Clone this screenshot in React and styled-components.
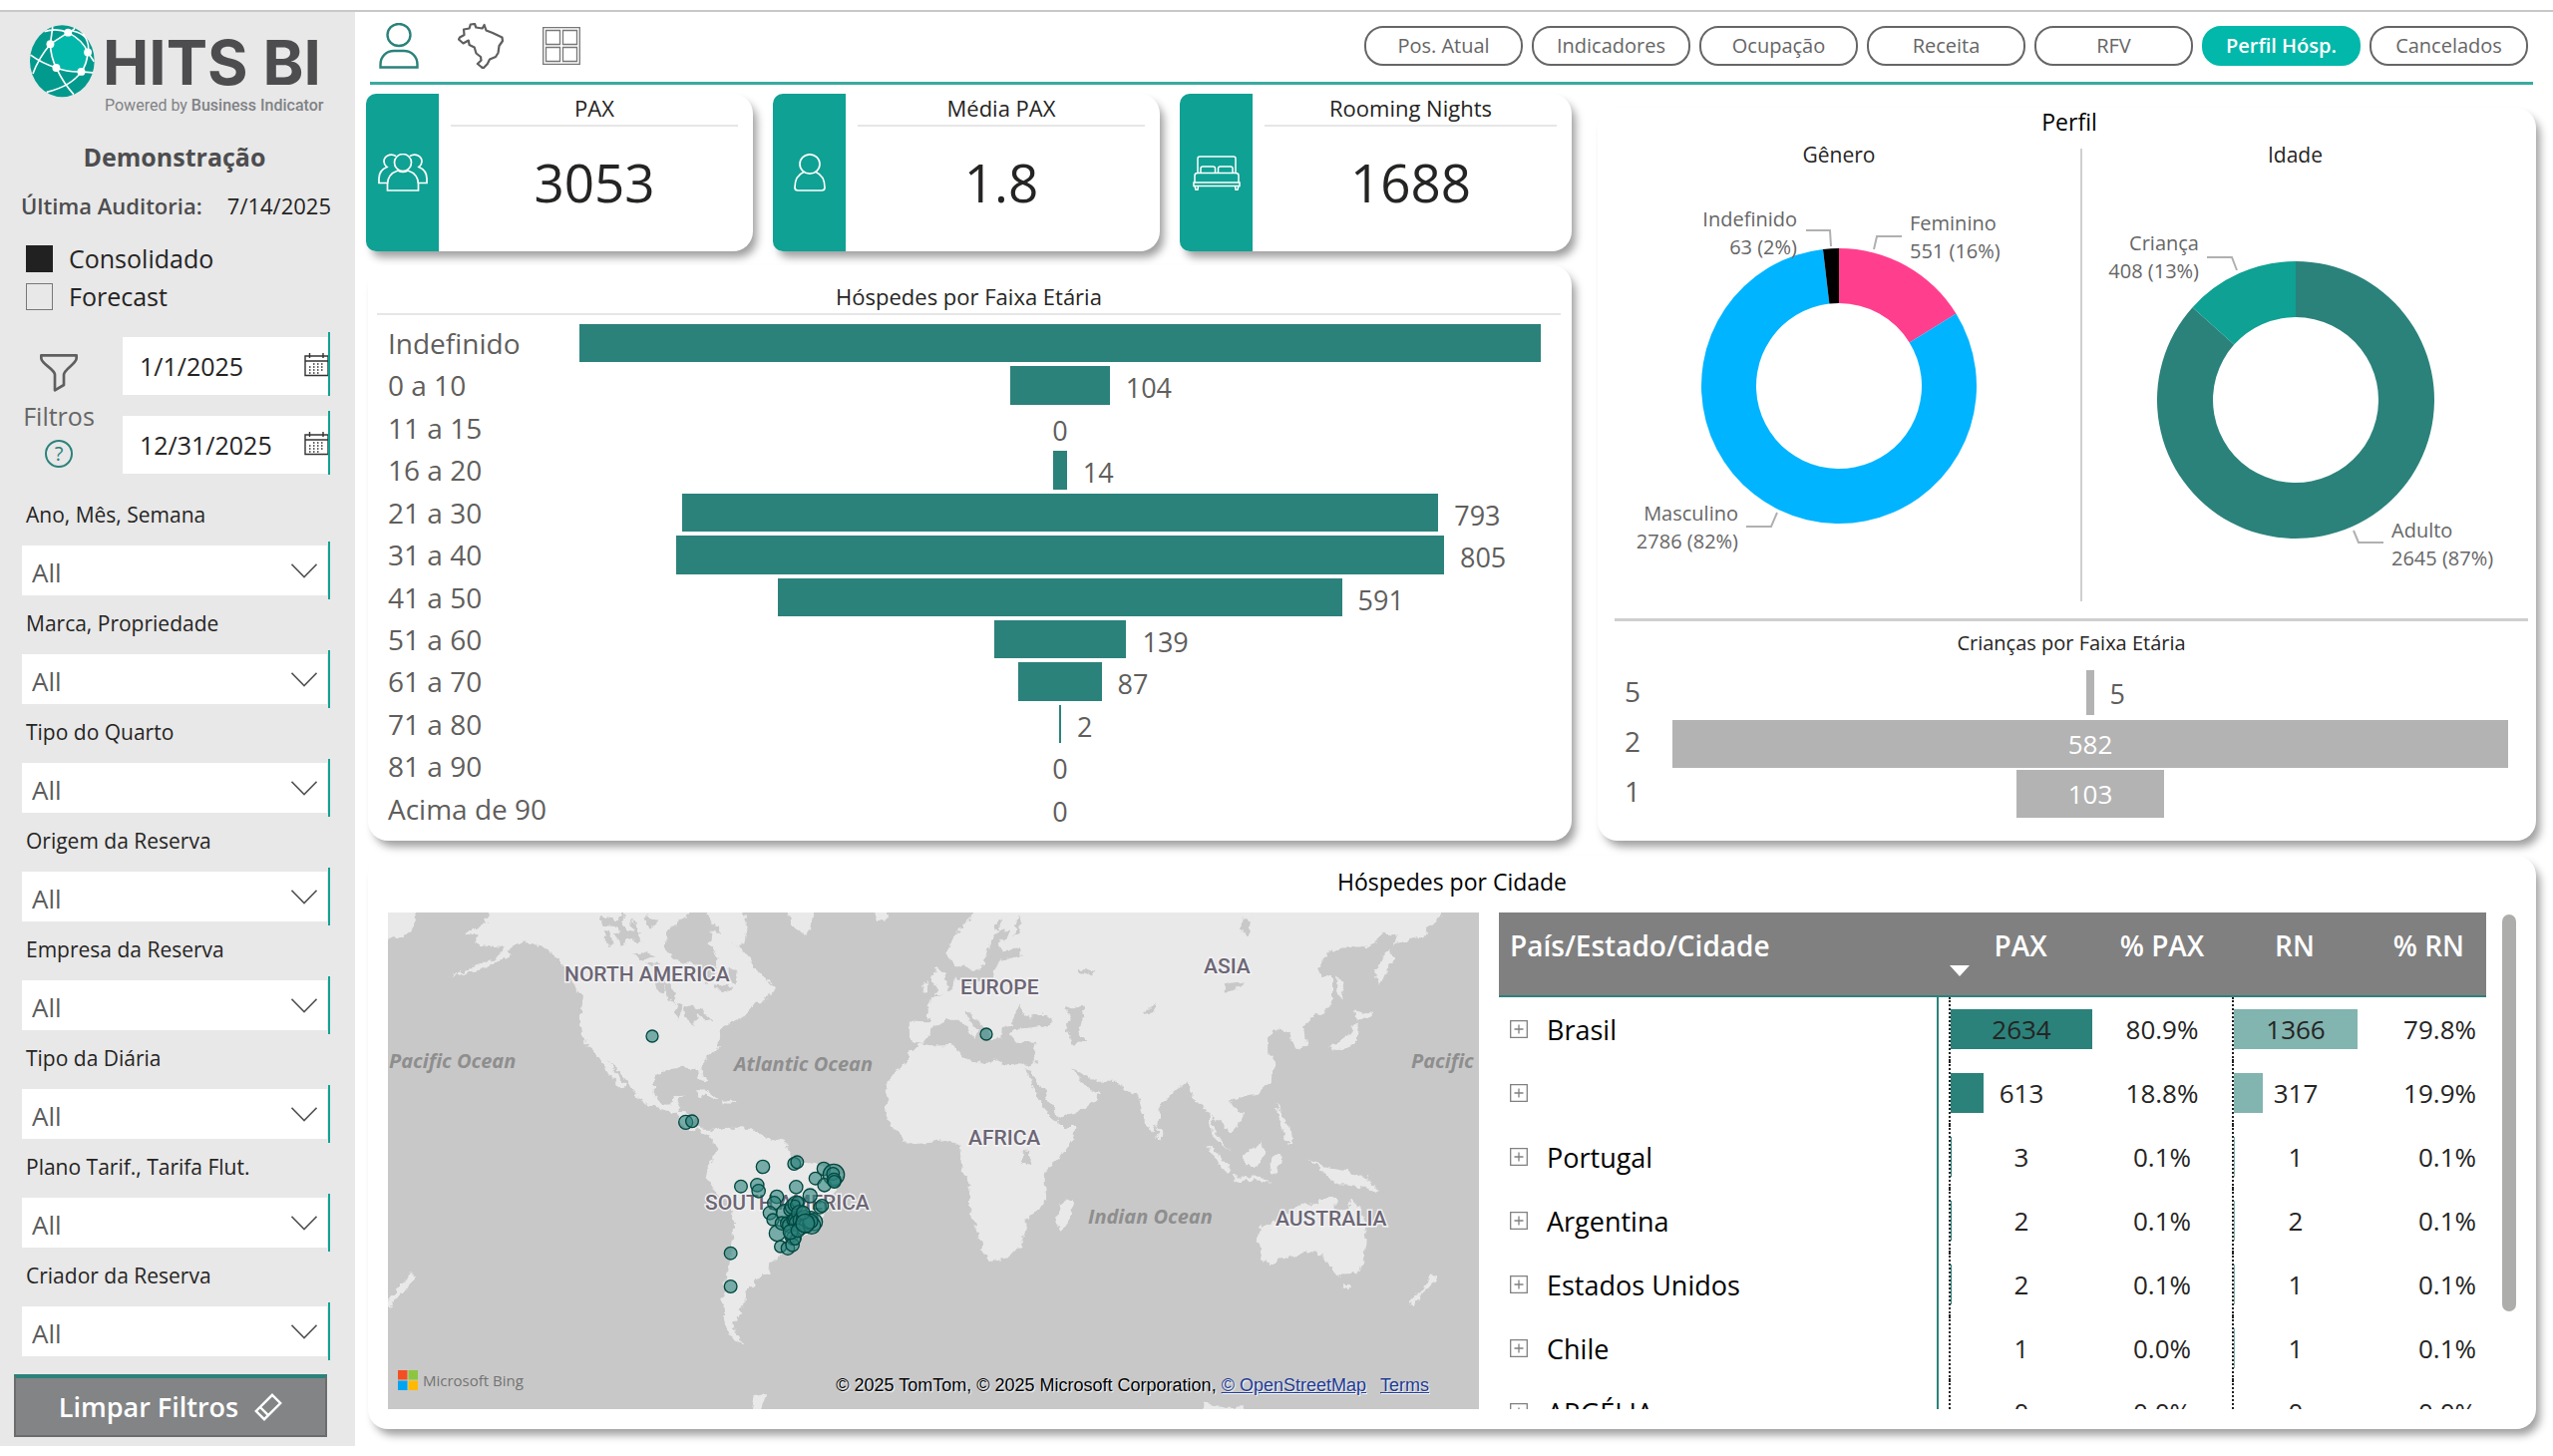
import { useState } from "react";
import styled, { createGlobalStyle } from "styled-components";

// -------------------- ESTILOS -------------------- //
const GlobalStyle = createGlobalStyle`
  * { box-sizing: border-box; }
  body {
    margin: 0;
    background: #fff;
    color: #252423;
    font-family: 'Open Sans', 'Noto Sans', sans-serif;
  }
  button, input, select { font-family: inherit; }
`;

const Page = styled.div`
  min-height: 100vh;
  padding: 10px 0;
  background: #fff;
`;

const Frame = styled.div`
  display: flex;
  border-top: 2px solid #c8c8c8;
`;

const Sidebar = styled.aside`
  display: flex;
  flex-direction: column;
  flex: 0 0 356px;
  padding: 13px 0 9px;
  background: #e8e8e8;
`;

const Brand = styled.div`
  display: flex;
  gap: 8px;
  padding-left: 30px;
`;

const BrandText = styled.div`
  padding-top: 8px;
  white-space: nowrap;
`;

const BrandName = styled.div`
  font-family: Inter, sans-serif;
  font-size: 62px;
  font-weight: 700;
  line-height: 60px;
  color: #4d4d4f;
`;

const BrandNote = styled.div`
  margin: 3px 0 0 2px;
  font-family: Roboto, sans-serif;
  font-size: 16px;
  line-height: 20px;
  color: #808285;

  b { font-weight: 500; }
`;

const HotelName = styled.h1`
  margin: 23px 0 0;
  padding-right: 6px;
  font-size: 25px;
  font-weight: 700;
  line-height: 36px;
  text-align: center;
  color: #4d4d4f;
`;

const AuditRow = styled.div`
  display: flex;
  justify-content: space-between;
  margin: 16px 24px 0 21px;
  font-size: 22px;
  line-height: 30px;
  white-space: nowrap;

  b {
    font-weight: 600;
    color: #4d4d4f;
  }
`;

const CheckList = styled.div`
  margin: 19px 0 0 26px;
`;

const CheckLabel = styled.label`
  display: flex;
  align-items: center;
  gap: 16px;
  height: 38px;
  font-size: 25px;
`;

const CheckBox = styled.input`
  appearance: none;
  width: 27px;
  height: 27px;
  margin: 0;
  border: 1px solid #777;

  &:checked {
    background: #212121;
    border-color: #212121;
  }
`;

const FilterHead = styled.div`
  display: flex;
  justify-content: space-between;
  margin: 17px 25px 0 14px;
`;

const FilterCaption = styled.div`
  display: flex;
  flex-direction: column;
  align-items: center;
  width: 90px;
  padding-top: 22px;
  font-size: 25px;
  line-height: 48px;
  color: #666;
`;

const HelpButton = styled.button`
  width: 28px;
  height: 28px;
  padding: 0;
  border: 2px solid #2b827b;
  border-radius: 50%;
  background: none;
  font-size: 20px;
  line-height: 24px;
  color: #2b827b;
`;

const DateStack = styled.div`
  display: grid;
  gap: 15px;
  width: 208px;
`;

const FieldBox = styled.div`
  position: relative;
  padding: ${({ $date }) => ($date ? "5px 0 1px" : "4px 1px 4px 0")};
  border-right: 2px solid #0fa193;

  svg {
    position: absolute;
    top: ${({ $date }) => ($date ? "21px" : "22px")};
    right: ${({ $date }) => ($date ? "0" : "11px")};
    pointer-events: none;
  }
`;

const DateInput = styled.input`
  display: block;
  width: 100%;
  height: 58px;
  padding: 0 0 0 17px;
  border: 0;
  background: #fff;
  font-size: 25px;
  color: #252423;
`;

const FilterList = styled.div`
  display: grid;
  gap: 10px;
  margin: 26px 25px 0 22px;
`;

const FilterLabel = styled.label`
  display: block;
  margin: 0 0 13px 4px;
  font-size: 21px;
  font-weight: 500;
  line-height: 28px;
`;

const Select = styled.select`
  appearance: none;
  display: block;
  width: 100%;
  height: 50px;
  padding: 3px 0 0 10px;
  border: 0;
  border-radius: 0;
  background: #fff;
  font-size: 26px;
  color: #5c5c5c;
`;

const ClearButton = styled.button`
  display: flex;
  align-items: center;
  justify-content: center;
  gap: 16px;
  height: 63px;
  margin: 14px 28px 0 14px;
  border: 2px solid #6b6c6d;
  border-top: 4px solid #2b827b;
  background: #828486;
  font-size: 27px;
  font-weight: 600;
  color: #fff;
`;

const Content = styled.main`
  flex: 1;
  min-width: 0;
  padding: 0 17px 17px 11px;
`;

const Header = styled.header`
  display: flex;
  align-items: center;
  justify-content: space-between;
  height: 73px;
  margin: 0 3px 0 4px;
  padding: 0 5px 2px 9px;
  border-bottom: 3px solid #3aaa9f;
`;

const IconNav = styled.nav`
  display: flex;
  align-items: center;
  gap: 39px;
`;

const IconButton = styled.button`
  display: flex;
  padding: 0;
  border: 0;
  background: none;
`;

const Tabs = styled.nav`
  display: flex;
  gap: 9px;
`;

const Tab = styled.button`
  width: 159px;
  height: 40px;
  padding: 0;
  border: 2px solid ${({ $active }) => ($active ? "#01b8aa" : "#666")};
  border-radius: 19px;
  background: ${({ $active }) => ($active ? "#01b8aa" : "#fff")};
  font-size: 20px;
  font-weight: ${({ $active }) => ($active ? 600 : 400)};
  line-height: 36px;
  color: ${({ $active }) => ($active ? "#fff" : "#666")};
`;

const Upper = styled.div`
  display: grid;
  grid-template-columns: 1209fr 941fr;
  gap: 26px;
  margin-top: 9px;
`;

const LeftColumn = styled.div`
  display: flex;
  flex-direction: column;
  gap: 14px;
`;

const Card = styled.section`
  border-radius: 20px;
  background: #fff;
  box-shadow: 5px 7px 9px -1px rgba(0, 0, 0, 0.38);
`;

const KpiRow = styled.div`
  display: grid;
  grid-template-columns: 388fr 388fr 393fr;
  gap: 20px;
`;

const Kpi = styled(Card)`
  display: flex;
  height: 158px;
  border-radius: 10px 20px 20px 10px;
`;

const KpiIcon = styled.div`
  display: flex;
  align-items: center;
  justify-content: center;
  flex: 0 0 73px;
  border-radius: 10px 0 0 10px;
  background: #0fa193;
`;

const KpiBody = styled.div`
  flex: 1;
  padding: 0 15px 0 12px;
  text-align: center;
`;

const KpiTitle = styled.h2`
  margin: 0;
  padding-bottom: 3px;
  border-bottom: 2px solid #e6e6e6;
  font-size: 22px;
  font-weight: 400;
  line-height: 28px;
`;

const KpiValue = styled.div`
  font-size: 53px;
  line-height: 112px;
`;

const FunnelCard = styled(Card)`
  display: flex;
  flex: 1;
  flex-direction: column;
  margin-left: 2px;
  padding: 14px 11px 13px 9px;
`;

const ChartTitle = styled.h2`
  margin: 0;
  font-size: ${({ $size }) => $size || 22}px;
  font-weight: 400;
  line-height: 34px;
  text-align: center;
  color: ${({ $dark }) => ($dark ? "#000" : "#252423")};
`;

const Rule = styled.hr`
  width: auto;
  margin: ${({ $margin }) => $margin || 0};
  height: ${({ $thick }) => $thick || 2}px;
  border: 0;
  background: ${({ $color }) => $color || "#e6e6e6"};
`;

const FunnelRows = styled.div`
  display: flex;
  flex: 1;
  flex-direction: column;
  gap: 4px;
  padding: 9px 20px 0 11px;
`;

const BarRow = styled.div`
  display: grid;
  grid-template-columns: ${({ $label }) => $label}px 1fr;
  flex: 1;
  align-items: stretch;
  min-height: 38px;
  font-size: 28px;
  line-height: 38px;
  color: #605e5c;
`;

const BarTrack = styled.div`
  display: flex;
  justify-content: center;
  font-size: 27px;

  &::before {
    content: "";
    flex: 1 1 0;
  }
`;

const Bar = styled.div`
  flex: none;
  background: ${({ $color }) => $color};
`;

const BarInside = styled(Bar)`
  text-align: center;
  font-size: 26px;
  line-height: 48px;
  color: #fff;
`;

const BarValue = styled.span`
  flex: 1 1 0;
  width: 0;
  height: 38px;
  padding-top: 3px;
  text-indent: 16px;
  white-space: nowrap;
`;

const BarZero = styled.span`
  height: 38px;
  padding-top: 3px;
`;

const BarEnd = styled.span`
  flex: 1 1 0;
`;

const ProfileCard = styled(Card)`
  margin-top: 14px;
  padding-bottom: 26px;
`;

const ProfileTitle = styled.h2`
  margin: 0;
  padding-left: 5px;
  font-size: 23px;
  font-weight: 400;
  line-height: 29px;
  text-align: center;
  color: #000;
`;

const Halves = styled.div`
  display: grid;
  grid-template-columns: 484fr 2px 427fr;
  padding-right: 28px;
`;

const Half = styled.div`
  display: flex;
  flex-direction: column;
  align-items: center;
  min-width: 0;
`;

const HalfTitle = styled.h3`
  margin: 0;
  font-size: 21px;
  font-weight: 400;
  line-height: 36px;
`;

const Divider = styled.div`
  margin-top: 12px;
  background: #d0d0d0;
`;

const DonutSvg = styled.svg`
  display: block;
  overflow: visible;
  font-size: 20px;
  fill: #666;
`;

const KidsTitle = styled(ProfileTitle)`
  padding-left: 9px;
  font-size: 20px;
  line-height: 34px;
  color: #252423;
`;

const KidsRows = styled.div`
  display: grid;
  gap: 5px;
  padding: 10px 28px 0 27px;
`;

const KidsRow = styled(BarRow)`
  height: 45px;
  line-height: 42px;
`;

const CityCard = styled(Card)`
  margin: 15px 0 0 2px;
  padding: 9px 20px 20px;
`;

const CityGrid = styled.div`
  display: grid;
  grid-template-columns: 1094fr 20px 990fr 16px 14px;
  margin-top: 14px;
`;

const MapBox = styled.div`
  position: relative;
  background: #c8c8c8;
  overflow: hidden;

  > svg {
    display: block;
    width: 100%;
    height: auto;
  }
`;

const RegionLabel = styled.text`
  font-family: Roboto, sans-serif;
  font-size: 21px;
  font-weight: 500;
  fill: #6c6675;
  stroke: #f2f2f2;
  stroke-width: 3px;
  paint-order: stroke;
`;

const OceanLabel = styled.text`
  font-size: 20px;
  font-style: italic;
  font-weight: 700;
  fill: #8e8e8e;
`;

const MapCredits = styled.div`
  position: absolute;
  right: 50px;
  bottom: 13px;
  font-family: 'Liberation Sans', sans-serif;
  font-size: 18px;
  line-height: 22px;
  color: #000;
  white-space: nowrap;
  text-shadow: 1px 1px 1px #fff;

  a { color: #1f3a93; }
  a + a { margin-left: 9px; }
`;

const BingMark = styled.div`
  position: absolute;
  left: 10px;
  bottom: 19px;
  display: flex;
  align-items: center;
  gap: 5px;
  font-size: 15px;
  line-height: 20px;
  color: #737373;
`;

const TableClip = styled.div`
  grid-column: 3;
  height: 0;
  min-height: 100%;
  overflow: hidden;
`;

const Table = styled.table`
  width: 100%;
  border-collapse: separate;
  border-spacing: 0;
  table-layout: fixed;
  font-size: 26px;
  text-align: center;
`;

const Th = styled.th`
  height: 85px;
  padding: 13px 11px 0;
  border-bottom: 2px solid #2b827b;
  background: #808080;
  font-size: 28px;
  font-weight: 600;
  line-height: 40px;
  color: #fff;
  text-align: ${({ $align }) => $align || "center"};
  vertical-align: top;

  &:last-child { padding-right: 22px; }
`;

const SortMark = styled.span`
  display: block;
  width: 20px;
  height: 11px;
  background: #fff;
  clip-path: polygon(0 0, 100% 0, 50% 100%);
`;

const Td = styled.td`
  height: 64px;
  padding: 0;
  line-height: 40px;

  &:last-child {
    padding-right: 10px;
    text-align: right;
  }
`;

const NameCell = styled.th`
  height: 64px;
  padding: 0 0 0 11px;
  border-right: 2px solid #2b827b;
  font-size: 27px;
  font-weight: 400;
  text-align: left;
  color: #000;

  > div {
    display: flex;
    align-items: center;
    gap: 19px;
  }
`;

const Expand = styled.button`
  display: flex;
  padding: 0;
  border: 0;
  background: none;
`;

const DataBar = styled.div`
  display: grid;
  align-items: center;
  height: 64px;
  margin-left: 10px;
  padding-right: 10px;
  border-left: 2px dotted #222;

  > * { grid-area: 1 / 1; }
`;

const DataFill = styled.div`
  height: 40px;
  background: ${({ $color }) => $color};
`;

const Scroll = styled.div`
  grid-column: 5;
  height: 80%;
  margin-top: 2px;
  border-radius: 7px;
  background: #adadab;
`;

// -------------------- DATOS -------------------- //
const filtros = [
  "Ano, Mês, Semana",
  "Marca, Propriedade",
  "Tipo do Quarto",
  "Origem da Reserva",
  "Empresa da Reserva",
  "Tipo da Diária",
  "Plano Tarif., Tarifa Flut.",
  "Criador da Reserva",
];

const abas = ["Pos. Atual", "Indicadores", "Ocupação", "Receita", "RFV", "Perfil Hósp.", "Cancelados"];

const faixas = [
  { faixa: "Indefinido", total: 1008, semRotulo: true },
  { faixa: "0 a 10", total: 104 },
  { faixa: "11 a 15", total: 0 },
  { faixa: "16 a 20", total: 14 },
  { faixa: "21 a 30", total: 793 },
  { faixa: "31 a 40", total: 805 },
  { faixa: "41 a 50", total: 591 },
  { faixa: "51 a 60", total: 139 },
  { faixa: "61 a 70", total: 87 },
  { faixa: "71 a 80", total: 2 },
  { faixa: "81 a 90", total: 0 },
  { faixa: "Acima de 90", total: 0 },
];

const criancas = [
  { idade: "5", total: 5 },
  { idade: "2", total: 582 },
  { idade: "1", total: 103 },
];

const genero = [
  { valor: 551, cor: "#ff3f8e" },
  { valor: 2786, cor: "#00b4ff" },
  { valor: 63, cor: "#000" },
];

const idade = [
  { valor: 2645, cor: "#2b827b" },
  { valor: 408, cor: "#0fa193" },
];

const paises = [
  { nome: "Brasil", pax: 2634, pPax: "80.9%", rn: 1366, pRn: "79.8%" },
  { nome: "", pax: 613, pPax: "18.8%", rn: 317, pRn: "19.9%" },
  { nome: "Portugal", pax: 3, pPax: "0.1%", rn: 1, pRn: "0.1%" },
  { nome: "Argentina", pax: 2, pPax: "0.1%", rn: 2, pRn: "0.1%" },
  { nome: "Estados Unidos", pax: 2, pPax: "0.1%", rn: 1, pRn: "0.1%" },
  { nome: "Chile", pax: 1, pPax: "0.0%", rn: 1, pRn: "0.1%" },
  { nome: "ARGÉLIA", pax: 0, pPax: "0.0%", rn: 0, pRn: "0.0%" },
];

const terras = [
  // América do Norte
  "190,110 160,165 165,180 130,205 150,212 150,235 190,245 175,275 140,300 112,322 150,308 192,270 200,240 215,225 245,245 262,275 275,310 285,350 298,375 294,410 294,460 300,500 320,545 335,590 350,628 358,620 345,590 333,555 345,575 360,605 368,640 385,668 405,685 425,692 432,705 440,735 455,740 470,752 480,745 475,735 460,735 450,725 452,700 440,690 430,690 428,670 437,645 425,650 418,670 402,668 396,640 397,600 405,580 425,572 440,570 455,572 462,605 468,608 462,570 470,540 485,515 490,465 510,440 525,430 532,400 545,395 555,380 562,350 545,310 530,285 520,250 505,230 495,200 478,200 475,240 485,270 480,320 470,345 462,300 450,290 425,275 410,240 415,200 430,170 445,155 450,110",
  "465,110 515,110 525,190 522,230 512,240 500,222 485,190 475,180",
  "575,110 620,110 615,190 607,215 595,195 585,170",
  "700,110 728,110 720,165 706,175",
  "-10,110 68,110 65,185 45,215 -10,225",
  "455,630 470,636 482,652 476,655 460,640",
  "490,658 512,660 508,668 492,666",
  // América do Sul
  "480,740 495,733 510,732 535,738 550,755 560,765 580,775 585,800 590,815 610,830 640,840 660,860 655,890 640,920 633,970 625,1000 600,1030 590,1060 575,1080 558,1100 555,1130 535,1140 538,1160 525,1175 525,1200 515,1220 518,1240 508,1260 510,1290 523,1322 505,1300 495,1270 490,1200 497,1150 503,1080 507,1020 508,960 495,935 480,900 467,860 470,840 480,810 482,780 470,755",
  // África
  "762,505 790,510 815,508 822,530 830,545 860,560 870,548 890,560 915,562 920,590 935,630 950,680 958,710 960,730 984,730 980,765 960,810 940,850 940,880 942,920 935,950 915,975 915,1010 905,1050 890,1085 862,1095 855,1070 845,1010 838,960 833,940 837,900 825,850 822,800 825,780 800,765 785,770 750,775 735,750 722,715 718,690 722,660 718,630 728,590 745,560 750,530",
  "978,920 982,940 970,1000 962,1012 956,990 960,945",
  // Europa e Ásia
  "750,445 778,447 778,420 776,400 785,385 800,365 812,350 816,325 825,340 850,335 868,330 870,300 880,280 905,268 905,250 880,255 878,230 890,200 880,195 865,220 860,250 855,290 840,310 828,290 815,290 805,265 808,235 820,200 835,170 850,110 1490,110 1490,165 1470,190 1475,210 1430,230 1420,250 1425,280 1415,310 1405,350 1400,310 1408,270 1425,240 1430,215 1410,200 1400,235 1380,245 1345,245 1325,270 1320,310 1340,325 1340,370 1335,410 1310,440 1300,455 1305,510 1290,520 1283,490 1280,475 1262,465 1250,490 1250,530 1260,560 1255,600 1235,640 1210,650 1195,660 1215,690 1210,730 1195,740 1180,710 1172,700 1178,750 1195,790 1200,800 1185,775 1172,750 1168,690 1150,660 1138,610 1115,645 1100,670 1098,720 1088,745 1078,710 1072,660 1065,635 1050,625 1040,605 1010,605 985,580 975,575 990,600 1000,625 1015,640 1005,670 980,695 960,705 948,670 935,620 920,580 915,570 928,555 925,520 928,500 900,500 892,480 900,465 945,455 950,440 935,420 918,435 905,400 895,430 895,455 880,460 880,490 868,495 860,470 848,445 838,425 830,420 840,460 850,470 840,490 835,470 820,440 805,440 785,455 780,480 770,505 752,500",
  "790,300 800,320 806,360 795,372 783,370 790,350 782,330",
  "770,335 778,335 775,360 768,362",
  "1346,320 1356,340 1352,388 1346,360",
  "1372,415 1395,425 1385,440 1374,436",
  "1376,445 1374,500 1352,522 1335,520 1345,502 1365,480 1370,450",
  "1096,728 1104,745 1102,762 1096,755",
  // Indonésia e Filipinas
  "1262,665 1270,700 1282,730 1285,775 1275,770 1264,705",
  "1163,775 1180,800 1200,850 1196,860 1178,822",
  "1200,863 1240,868 1255,880 1205,874",
  "1218,800 1240,775 1248,800 1236,838 1218,830",
  "1255,810 1270,806 1262,855 1255,850",
  "1305,815 1330,840 1360,850 1390,870 1405,905 1380,893 1350,887 1330,855",
  // Oceania
  "1240,1000 1262,985 1280,960 1300,935 1320,940 1325,925 1345,925 1345,950 1362,960 1368,920 1378,950 1385,990 1388,1040 1385,1080 1375,1130 1350,1132 1335,1110 1325,1075 1305,1070 1280,1080 1262,1095 1243,1100 1240,1060 1235,1020",
  "1355,1160 1366,1160 1362,1182",
  "1478,1128 1486,1140 1475,1165 1465,1175 1452,1218 1446,1210 1465,1170",
  "58,1128 65,1140 52,1165 32,1215 20,1215 40,1175",
  "530,1520 535,1460 552,1455 540,1520",
  "1160,1520 1162,1478 1190,1490 1218,1488 1220,1520",
];

const lagos = [
  "970,410 990,400 995,430 988,470 996,500 980,505 970,470 976,440",
  "912,570 922,585 959,700 956,716 945,700 930,650",
  "438,400 462,412 478,440 470,445 458,425 450,460 440,430",
  "320,160 350,170 345,185 325,180",
  "340,210 372,196 380,205 350,225",
  "366,262 382,255 398,266 380,275",
  "400,330 410,330 412,375 404,368",
  "385,285 405,290 398,302",
  "345,160 352,150 358,230 350,240",
  "365,170 372,175 376,235 368,225",
  "382,160 405,168 400,190 386,186",
  "325,205 334,200 338,240 330,232",
  "410,345 420,350 426,395 418,385",
  "428,395 436,400 430,440 424,425",
  "480,340 505,352 498,362 482,356",
  "500,300 512,306 508,345 500,330",
  "1080,405 1096,403 1090,420 1078,425",
  "1188,345 1215,335 1218,342 1192,362",
  "1216,165 1226,180 1220,215 1214,190",
  "986,300 1012,310 1004,318 988,310",
  "900,165 908,160 904,200 898,215",
  "874,170 880,165 876,200 870,196",
  "908,795 920,798 918,835 910,830",
];

// x, y, raio
const hospedes = [
  [83, 136, 21], [102, 133, 19], [315, 270, 20], [409, 261, 19], [418, 256, 19],
  [249, 329, 19], [298, 325, 20], [302, 343, 20], [415, 331, 20], [457, 357, 21],
  [357, 360, 20], [349, 379, 20], [336, 409, 20], [345, 429, 18], [487, 392, 19],
  [493, 387, 19], [498, 276, 20], [528, 294, 32], [473, 305, 19], [500, 325, 20],
  [526, 291, 19], [529, 310, 21], [530, 315, 19], [218, 530, 19], [218, 630, 19],
  [368, 510, 18], [390, 515, 20], [358, 470, 24], [384, 410, 28], [372, 440, 20],
  [396, 400, 18], [404, 390, 22], [414, 382, 24], [420, 376, 18], [412, 384, 14],
  [388, 440, 20], [396, 446, 22], [405, 430, 18], [408, 427, 16], [425, 410, 24],
  [418, 440, 24], [432, 432, 26], [440, 425, 24], [430, 452, 22], [446, 446, 22],
  [460, 424, 20], [468, 436, 26], [462, 446, 26], [453, 440, 18], [458, 434, 22],
  [400, 478, 20], [408, 484, 22], [404, 505, 20], [412, 489, 16], [398, 466, 22],
  [420, 462, 20], [436, 408, 20], [442, 440, 28],
];

// -------------------- ÍCONES -------------------- //
const Logo = () => (
  <svg width="65" height="73" viewBox="89 75 197 219" fill="none" stroke="#fff" strokeWidth="6">
    <ellipse cx="187" cy="184" rx="98" ry="109" fill="#029a8d" stroke="none" />
    <path d="M205 97 L151 132 Q152 170 169 204 Q205 218 245 216 Q262 195 265 157 Q250 120 205 97Z" fill="#02b8ab" strokeWidth="5" />
    <path d="M133 94 Q170 82 205 97 M158 80 L151 132 Q115 175 98 222 M91 165 Q125 190 169 204 Q190 250 222 285 M140 278 Q215 260 245 216 L280 219 M205 97 Q230 86 222 83 M265 157 Q272 130 250 100 M265 157 L284 185 M218 92 Q250 98 262 118" strokeWidth="5" />
    <g fill="#fff" stroke="none">
      <circle cx="205" cy="97" r="12" />
      <circle cx="151" cy="132" r="12" />
      <circle cx="265" cy="157" r="12" />
      <circle cx="169" cy="204" r="12" />
      <circle cx="245" cy="216" r="12" />
    </g>
  </svg>
);

const FunnelIcon = () => (
  <svg width="38" height="38" viewBox="120 1065 114 114" fill="none" stroke="#5f5f5f" strokeWidth="8">
    <path d="M124 1069H230V1078C228 1096 193 1110 192 1127V1158L165 1174V1127C164 1110 126 1096 124 1078Z" strokeLinejoin="round" />
  </svg>
);

const CalendarIcon = () => (
  <svg width="24" height="24" viewBox="0 0 24 24" fill="none" stroke="#333" strokeWidth="1.4">
    <path d="M1 3H24V22.500H1ZM1 8H24M5.500 0V5M19 0V5" />
    <path d="M9 11H21M5 14H21M5 17H21M5 20H16" strokeDasharray="1.500 2.500" />
  </svg>
);

const Chevron = () => (
  <svg width="26" height="15" viewBox="0 0 26 15" fill="none" stroke="#555" strokeWidth="1.6">
    <path d="M.5 .8L13 13.500L25.500 .8" />
  </svg>
);

const EraserIcon = () => (
  <svg width="28" height="28" viewBox="0 0 28 28" fill="none" stroke="#fff" strokeWidth="2.400">
    <path d="M18 1.800L26.200 10L10 26.200L1.800 18ZM5.800 14L14 22.200" />
  </svg>
);

const PersonIcon = () => (
  <svg width="40" height="46" viewBox="0 0 40 46" fill="none" stroke="#2b827b" strokeWidth="2.400">
    <ellipse cx="20" cy="12" rx="11.500" ry="11" />
    <path d="M1.500 44.500V42C1.500 33 8 28 15 28H25C32 28 38.500 33 38.500 42V44.500Z" />
  </svg>
);

const BrazilIcon = () => (
  <svg width="46" height="46" viewBox="0 0 46 46" fill="none" stroke="#5f5f5f" strokeWidth="2.200" strokeLinejoin="round">
    <path d="M17 1L18.300 4.500L24.600 5.500L26.600 2L28.500 7.500L35 10L44.500 14.500L45 18L41.500 23L40.500 30L38 34L32 36.500L29.800 41L25.500 45.500L23.500 44L19.800 41L23.500 37.500L23 34L18.500 30.500L16.700 24.500L11.600 22L10.800 17.500L5.500 20.500L1 16.500L2 14.500L6.500 12L6 6.500L11.600 5.500L12.800 1.500Z" />
  </svg>
);

const WindowIcon = () => (
  <svg width="38" height="38" viewBox="0 0 38 38" fill="none" stroke="#777" strokeWidth="1.300">
    <path d="M.7 .7H37.300V37.300H.7ZM3.500 3.500H17.500V17.500H3.500ZM20.500 3.500H34.500V17.500H20.500ZM3.500 20.500H17.500V34.500H3.500ZM20.500 20.500H34.500V34.500H20.500Z" />
  </svg>
);

const GroupIcon = () => (
  <svg width="50" height="38" viewBox="0 0 50 38" fill="none" stroke="#fff" strokeWidth="1.700">
    <ellipse cx="25" cy="9" rx="8.500" ry="8.500" />
    <path d="M9.500 37V31C9.500 24 14 19 20 17Q25 20 30 17C36 19 40.500 24 40.500 31V37Z" />
    <path d="M18 2.500C12 -1 6 3 6 8Q6 11 9 13.500C3 16 1 20 1 25V29.500H9.500M32 2.500C38 -1 44 3 44 8Q44 11 41 13.500C47 16 49 20 49 25V29.500H40.500" />
  </svg>
);

const SingleIcon = () => (
  <svg width="32" height="38" viewBox="0 0 32 38" fill="none" stroke="#fff" strokeWidth="1.700">
    <ellipse cx="16" cy="10.500" rx="10" ry="9.700" />
    <path d="M10 18.500C4 21 1 27 1 34Q1 37 4 37H28Q31 37 31 34C31 27 28 21 22 18.500" />
  </svg>
);

const BedIcon = () => (
  <svg width="48" height="35" viewBox="0 0 48 35" fill="none" stroke="#fff" strokeWidth="1.500">
    <path d="M5 17V3Q5 1 7 1H41Q43 1 43 3V17M8 17V13Q8 11 10 11H20.500Q22.500 11 22.500 13V17M25.500 17V13Q25.500 11 27.500 11H38Q40 11 40 13V17M2 27V20Q2 17.500 5 17.500H43Q46 17.500 46 20V27M1 27H47V30.500H1ZM2 30.500L3 34.300H5L5.500 30.500M42.500 30.500L43 34.300H45L46 30.500" />
  </svg>
);

const PlusBox = () => (
  <svg width="18" height="18" viewBox="0 0 18 18" fill="none" stroke="#808080" strokeWidth="1.300">
    <path d="M.7 .7H17.300V17.300H.7ZM9 4.500V13.500M4.500 9H13.500" />
  </svg>
);

// -------------------- COMPONENTES -------------------- //
function Donut({ dados, cy, raio, furo, titulo, children }) {
  const total = dados.reduce((soma, d) => soma + d.valor, 0);
  const ponto = (r, t) => `${220 + r * Math.sin(t)} ${cy - r * Math.cos(t)}`;
  let inicio = 0;

  return (
    <DonutSvg width="420" height="430" viewBox="10 0 420 430" role="img" aria-label={titulo}>
      {dados.map((d) => {
        const t0 = inicio;
        const t1 = t0 + (d.valor / total) * Math.PI * 2;
        const grande = t1 - t0 > Math.PI ? 1 : 0;
        inicio = t1;
        return (
          <path
            key={d.cor}
            fill={d.cor}
            d={`M${ponto(raio, t0)}A${raio} ${raio} 0 ${grande} 1 ${ponto(raio, t1)}L${ponto(furo, t1)}A${furo} ${furo} 0 ${grande} 0 ${ponto(furo, t0)}Z`}
          />
        );
      })}
      {children}
    </DonutSvg>
  );
}

function Rotulo({ x, y, nome, valor, fim, linha }) {
  const anchor = fim ? "end" : "start";
  return (
    <g>
      <text x={x} y={y} textAnchor={anchor}>{nome}</text>
      <text x={x} y={y + 28} textAnchor={anchor}>{valor}</text>
      <polyline points={linha} fill="none" stroke="#b0b0b0" strokeWidth="2" />
    </g>
  );
}

function Mapa() {
  return (
    <MapBox>
      <svg viewBox="0 0 1094 498" role="img" aria-label="Mapa de hóspedes por cidade">
        <defs>
          <filter id="costa" x="-20" y="-20" width="1134" height="538" filterUnits="userSpaceOnUse">
            <feTurbulence type="fractalNoise" baseFrequency="0.12" numOctaves="3" seed="4" />
            <feDisplacementMap in="SourceGraphic" scale="9" xChannelSelector="R" yChannelSelector="G" />
          </filter>
        </defs>
        <g filter="url(#costa)">
          <g transform="scale(0.7207 0.3699) translate(-26 -149)">
            {terras.map((p) => <polygon key={p} points={p} fill="#e9e9e9" />)}
            {lagos.map((p) => <polygon key={p} points={p} fill="#c8c8c8" />)}
          </g>
        </g>
        <RegionLabel x="177" y="69">NORTH AMERICA</RegionLabel>
        <RegionLabel x="574" y="82">EUROPE</RegionLabel>
        <RegionLabel x="818" y="61">ASIA</RegionLabel>
        <RegionLabel x="582" y="233">AFRICA</RegionLabel>
        <RegionLabel x="318" y="298">SOUTH AMERICA</RegionLabel>
        <RegionLabel x="890" y="314">AUSTRALIA</RegionLabel>
        <OceanLabel x="1" y="156">Pacific Ocean</OceanLabel>
        <OceanLabel x="347" y="159">Atlantic Ocean</OceanLabel>
        <OceanLabel x="702" y="312">Indian Ocean</OceanLabel>
        <OceanLabel x="1026" y="156">Pacific</OceanLabel>
        <g fill="#2b827b" fillOpacity="0.6" stroke="#01473f" strokeWidth="1.300">
          <circle cx="265" cy="124" r="6" />
          <circle cx="600" cy="122" r="6" />
        </g>
        <g
          transform="translate(271 165) scale(0.3333)"
          fill="#2b827b"
          fillOpacity="0.6"
          stroke="#01473f"
          strokeWidth="4"
        >
          {hospedes.map(([x, y, r]) => <circle key={`${x}-${y}`} cx={x} cy={y} r={r} />)}
        </g>
      </svg>
      <BingMark>
        <svg width="20" height="20" viewBox="0 0 20 20">
          <path d="M0 0H9.500V9.500H0Z" fill="#f25022" />
          <path d="M10.500 0H20V9.500H10.500Z" fill="#8cc63f" />
          <path d="M0 10.500H9.500V20H0Z" fill="#00a4ef" />
          <path d="M10.500 10.500H20V20H10.500Z" fill="#ffb900" />
        </svg>
        Microsoft Bing
      </BingMark>
      <MapCredits>
        © 2025 TomTom, © 2025 Microsoft Corporation, <a href="#osm">© OpenStreetMap</a>{" "}
        <a href="#terms">Terms</a>
      </MapCredits>
    </MapBox>
  );
}

export default function App() {
  const [aba, setAba] = useState("Perfil Hósp.");
  const [modo, setModo] = useState({ Consolidado: true, Forecast: false });

  const maxFaixa = Math.max(...faixas.map((f) => f.total));
  const maxCrianca = Math.max(...criancas.map((c) => c.total));

  return (
    <Page>
      <GlobalStyle />
      <Frame>
        <Sidebar>
          <Brand>
            <Logo />
            <BrandText>
              <BrandName>HITS BI</BrandName>
              <BrandNote>Powered by <b>Business Indicator</b></BrandNote>
            </BrandText>
          </Brand>
          <HotelName>Demonstração</HotelName>
          <AuditRow><b>Última Auditoria:</b><span>7/14/2025</span></AuditRow>

          <CheckList>
            {Object.keys(modo).map((m) => (
              <CheckLabel key={m}>
                <CheckBox
                  type="checkbox"
                  checked={modo[m]}
                  onChange={() => setModo({ ...modo, [m]: !modo[m] })}
                />
                {m}
              </CheckLabel>
            ))}
          </CheckList>

          <FilterHead>
            <FilterCaption>
              <FunnelIcon />
              Filtros
              <HelpButton aria-label="Ajuda">?</HelpButton>
            </FilterCaption>
            <DateStack>
              <FieldBox $date>
                <DateInput aria-label="Data inicial" defaultValue="1/1/2025" />
                <CalendarIcon />
              </FieldBox>
              <FieldBox $date>
                <DateInput aria-label="Data final" defaultValue="12/31/2025" />
                <CalendarIcon />
              </FieldBox>
            </DateStack>
          </FilterHead>

          <FilterList>
            {filtros.map((f, i) => (
              <div key={f}>
                <FilterLabel htmlFor={`filtro-${i}`}>{f}</FilterLabel>
                <FieldBox>
                  <Select id={`filtro-${i}`}>
                    <option>All</option>
                  </Select>
                  <Chevron />
                </FieldBox>
              </div>
            ))}
          </FilterList>

          <ClearButton>Limpar Filtros <EraserIcon /></ClearButton>
        </Sidebar>

        <Content>
          <Header>
            <IconNav>
              <IconButton aria-label="Perfil"><PersonIcon /></IconButton>
              <IconButton aria-label="Brasil"><BrazilIcon /></IconButton>
              <IconButton aria-label="Quartos"><WindowIcon /></IconButton>
            </IconNav>
            <Tabs>
              {abas.map((a) => (
                <Tab key={a} $active={a === aba} onClick={() => setAba(a)}>{a}</Tab>
              ))}
            </Tabs>
          </Header>

          <Upper>
            <LeftColumn>
              <KpiRow>
                <Kpi>
                  <KpiIcon><GroupIcon /></KpiIcon>
                  <KpiBody>
                    <KpiTitle>PAX</KpiTitle>
                    <KpiValue>3053</KpiValue>
                  </KpiBody>
                </Kpi>
                <Kpi>
                  <KpiIcon><SingleIcon /></KpiIcon>
                  <KpiBody>
                    <KpiTitle>Média PAX</KpiTitle>
                    <KpiValue>1.8</KpiValue>
                  </KpiBody>
                </Kpi>
                <Kpi>
                  <KpiIcon><BedIcon /></KpiIcon>
                  <KpiBody>
                    <KpiTitle>Rooming Nights</KpiTitle>
                    <KpiValue>1688</KpiValue>
                  </KpiBody>
                </Kpi>
              </KpiRow>

              <FunnelCard>
                <ChartTitle>Hóspedes por Faixa Etária</ChartTitle>
                <Rule />
                <FunnelRows>
                  {faixas.map((f) => (
                    <BarRow key={f.faixa} $label={192}>
                      <span>{f.faixa}</span>
                      <BarTrack>
                        {f.total > 0 ? (
                          <>
                            <Bar $color="#2b827b" style={{ width: `${(f.total / maxFaixa) * 100}%` }} />
                            <BarValue>{f.semRotulo ? "" : f.total}</BarValue>
                          </>
                        ) : (
                          <>
                            <BarZero>0</BarZero>
                            <BarEnd />
                          </>
                        )}
                      </BarTrack>
                    </BarRow>
                  ))}
                </FunnelRows>
              </FunnelCard>
            </LeftColumn>

            <ProfileCard>
              <ProfileTitle>Perfil</ProfileTitle>
              <Halves>
                <Half>
                  <HalfTitle>Gênero</HalfTitle>
                  <Donut dados={genero} cy={214} raio={138} furo={83} titulo="Gênero">
                    <Rotulo x={178} y={54} fim nome="Indefinido" valor="63 (2%)" linha="187,58 211,58 212,74" />
                    <Rotulo x={291} y={58} nome="Feminino" valor="551 (16%)" linha="283,64 258,64 255,77" />
                    <Rotulo x={119} y={349} fim nome="Masculino" valor="2786 (82%)" linha="127,355 152,355 158,341" />
                  </Donut>
                </Half>
                <Divider />
                <Half>
                  <HalfTitle>Idade</HalfTitle>
                  <Donut dados={idade} cy={228} raio={139} furo={83} titulo="Idade">
                    <Rotulo x={123} y={78} fim nome="Criança" valor="408 (13%)" linha="131,85 156,85 161,98" />
                    <Rotulo x={316} y={366} nome="Adulto" valor="2645 (87%)" linha="308,371 283,371 278,359" />
                  </Donut>
                </Half>
              </Halves>
              <Rule $thick={3} $color="#cfcfcf" $margin="17px 8px 5px 17px" />
              <KidsTitle>Crianças por Faixa Etária</KidsTitle>
              <KidsRows>
                {criancas.map((c) => (
                  <KidsRow key={c.idade} $label={48}>
                    <span>{c.idade}</span>
                    <BarTrack>
                      <BarInside $color="#b3b3b3" style={{ width: `${(c.total / maxCrianca) * 100}%` }}>
                        {c.total > 50 && c.total}
                      </BarInside>
                      <BarValue>{c.total > 50 ? "" : c.total}</BarValue>
                    </BarTrack>
                  </KidsRow>
                ))}
              </KidsRows>
            </ProfileCard>
          </Upper>

          <CityCard>
            <ChartTitle $size={23} $dark>Hóspedes por Cidade</ChartTitle>
            <CityGrid>
              <Mapa />
              <TableClip>
                <Table>
                  <colgroup>
                    <col />
                    <col width="164" />
                    <col width="120" />
                    <col width="146" />
                    <col width="119" />
                  </colgroup>
                  <thead>
                    <tr>
                      <Th $align="left">País/Estado/Cidade</Th>
                      <Th aria-sort="descending">PAX<SortMark /></Th>
                      <Th>% PAX</Th>
                      <Th>RN</Th>
                      <Th $align="right">% RN</Th>
                    </tr>
                  </thead>
                  <tbody>
                    {paises.map((p, i) => (
                      <tr key={i}>
                        <NameCell scope="row">
                          <div>
                            <Expand aria-label={`Expandir ${p.nome}`}><PlusBox /></Expand>
                            {p.nome}
                          </div>
                        </NameCell>
                        <Td>
                          <DataBar>
                            <DataFill $color="#2b827b" style={{ width: `${(p.pax / 2634) * 100}%` }} />
                            <span>{p.pax}</span>
                          </DataBar>
                        </Td>
                        <Td>{p.pPax}</Td>
                        <Td>
                          <DataBar>
                            <DataFill $color="#82b4b0" style={{ width: `${(p.rn / 1366) * 100}%` }} />
                            <span>{p.rn}</span>
                          </DataBar>
                        </Td>
                        <Td>{p.pRn}</Td>
                      </tr>
                    ))}
                  </tbody>
                </Table>
              </TableClip>
              <Scroll />
            </CityGrid>
          </CityCard>
        </Content>
      </Frame>
    </Page>
  );
}
